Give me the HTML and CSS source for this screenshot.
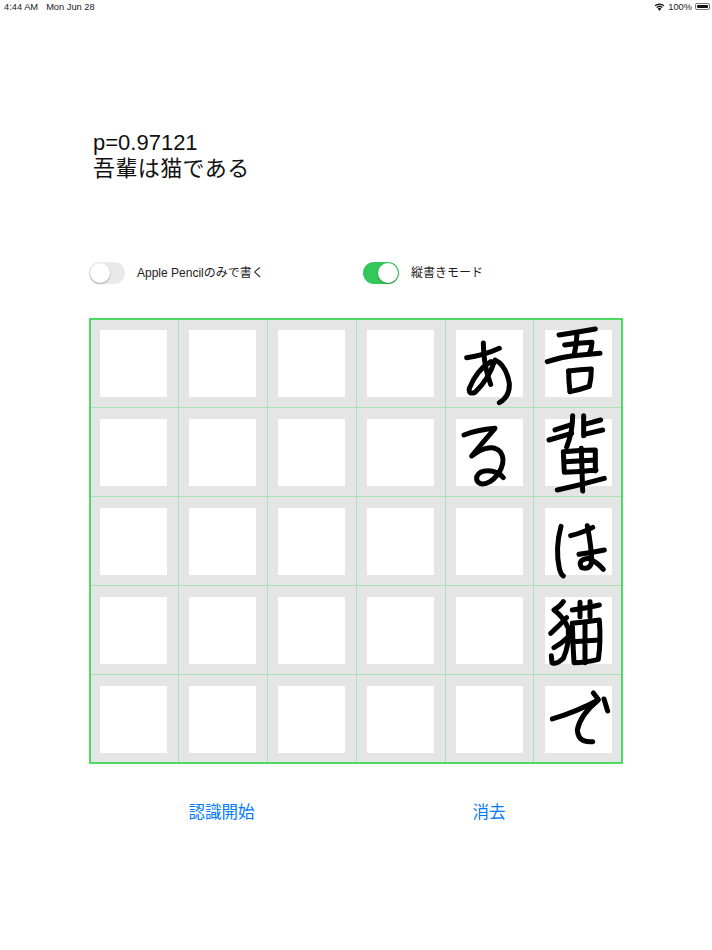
FILE: index.html
```html
<!DOCTYPE html>
<html lang="ja">
<head>
<meta charset="utf-8">
<title>手書き認識</title>
<link rel="stylesheet" href="styles.css">
</head>
<body>
<header class="status">
  <div class="status-left"><span>4:44 AM</span><span>Mon Jun 28</span></div>
  <div class="status-right">
    <svg class="wifi" viewBox="0 0 12 9" width="11" height="8"><path d="M6 8.8 3.9 6.4a3 3 0 0 1 4.2 0Z" fill="#111"/><path d="M2.8 5.2a4.7 4.7 0 0 1 6.4 0" class="wifi-arc"/><path d="M1 3.2a7.4 7.4 0 0 1 10 0" class="wifi-arc"/></svg>
    <span>100%</span>
    <span class="battery"><span class="battery-fill"></span></span>
  </div>
</header>
<section class="result">
  <div class="prob">p=0.97121</div>
  <div class="text">吾輩は猫である</div>
</section>
<section class="switches">
  <div class="switch-item">
    <span class="toggle"><span class="knob"></span></span>
    <span class="switch-label">Apple Pencilのみで書く</span>
  </div>
  <div class="switch-item">
    <span class="toggle on"><span class="knob"></span></span>
    <span class="switch-label">縦書きモード</span>
  </div>
</section>
<main class="board">
  <div class="cell"><div class="paper"></div></div><div class="cell"><div class="paper"></div></div><div class="cell"><div class="paper"></div></div><div class="cell"><div class="paper"></div></div><div class="cell"><div class="paper"></div></div><div class="cell"><div class="paper"></div></div>
  <div class="cell"><div class="paper"></div></div><div class="cell"><div class="paper"></div></div><div class="cell"><div class="paper"></div></div><div class="cell"><div class="paper"></div></div><div class="cell"><div class="paper"></div></div><div class="cell"><div class="paper"></div></div>
  <div class="cell"><div class="paper"></div></div><div class="cell"><div class="paper"></div></div><div class="cell"><div class="paper"></div></div><div class="cell"><div class="paper"></div></div><div class="cell"><div class="paper"></div></div><div class="cell"><div class="paper"></div></div>
  <div class="cell"><div class="paper"></div></div><div class="cell"><div class="paper"></div></div><div class="cell"><div class="paper"></div></div><div class="cell"><div class="paper"></div></div><div class="cell"><div class="paper"></div></div><div class="cell"><div class="paper"></div></div>
  <div class="cell"><div class="paper"></div></div><div class="cell"><div class="paper"></div></div><div class="cell"><div class="paper"></div></div><div class="cell"><div class="paper"></div></div><div class="cell"><div class="paper"></div></div><div class="cell"><div class="paper"></div></div>
  <svg class="ink" viewBox="0 0 534 446" width="534" height="446" aria-hidden="true">
    <g transform="translate(351 -3) scale(.3333)">
      <path d="M357 60 Q410 52 466 42"/>
      <path d="M411 56 Q410 90 402 122"/>
      <path d="M374 90 Q415 84 456 82 Q455 100 448 116"/>
      <path d="M322 140 Q360 126 400 122 Q445 118 480 115"/>
      <path d="M386 168 Q386 200 390 230"/>
      <path d="M386 168 Q420 164 454 162 Q454 190 448 214 Q420 224 390 230"/>
      <path d="M80 128 Q130 122 178 100"/>
      <path d="M130 84 Q130 150 152 208"/>
      <path d="M152 140 Q110 165 88 220 Q85 240 105 232 Q145 195 165 135 Q198 150 208 205 Q210 245 178 263"/>
      <path d="M72 360 Q110 345 165 340 Q130 380 95 423 C130 395 165 390 182 412 C200 440 180 480 150 500 C125 514 108 505 110 485 C120 462 165 460 190 488"/>
      <path d="M398 302 Q398 350 380 396"/>
      <path d="M431 302 V362"/>
      <path d="M345 345 L392 330M327 375 L395 355M433 328 L482 315M433 358 L488 345"/>
      <path d="M370 410 Q420 405 466 405 V468M370 410 L373 472Q420 470 468 465M375 440 L466 435"/>
      <path d="M352 525 Q420 510 493 490"/>
      <path d="M424 400 L428 528"/>
    </g>
    <g transform="translate(441 177) scale(.3333)">
      <path d="M93 94 Q75 160 88 220 Q92 238 100 243"/>
      <path d="M122 122 Q160 112 188 97"/>
      <path d="M147 178 Q190 172 223 165"/>
      <path d="M172 92 Q185 160 185 200 Q180 226 155 218 Q140 195 175 190 Q200 200 220 223"/>
      <path d="M100 320 Q90 335 72 345 Q100 365 115 400 Q118 450 100 490 Q80 510 66 503 L64 482"/>
      <path d="M110 368 Q85 395 62 415M115 425 Q95 445 72 458"/>
      <path d="M127 345 Q170 340 208 330M150 322 V365M180 320 V365"/>
      <path d="M127 385 Q170 380 208 375 Q213 440 205 493 Q165 503 132 503 Q128 440 127 385"/>
      <path d="M127 440 L208 435M165 382 L165 503"/>
      <path d="M67 672 Q140 650 205 615 Q150 660 142 705 Q145 745 188 740"/>
      <path d="M190 594 L204 612M222 612 L233 648"/>
    </g>
  </svg>
</main>
<footer class="actions">
  <button class="action start" type="button">認識開始</button>
  <button class="action clear" type="button">消去</button>
</footer>
</body>
</html>
```
FILE: styles.css
```css
* { box-sizing: border-box; }
html, body { margin: 0; padding: 0; background: #fff; }
body {
  width: 712px;
  height: 950px;
  overflow: hidden;
  font-family: "Liberation Sans", "Noto Sans CJK JP", sans-serif;
  color: #111;
}
.status {
  display: flex;
  justify-content: space-between;
  align-items: center;
  height: 13px;
  padding: 0 2px 0 4px;
  font-size: 9.3px;
  color: #222;
}
.status-left { display: flex; gap: 8px; }
.status-right { display: flex; align-items: center; gap: 3px; }
.wifi-arc { fill: none; stroke: #111; stroke-width: 1.5; }
.battery {
  display: flex;
  width: 15px;
  height: 7px;
  padding: 1px;
  border: 0.5px solid #777;
  border-radius: 2px;
}
.battery-fill { flex: 1; background: #111; border-radius: 1px; }
.result {
  padding: 117px 0 0 93px;
  height: 249px;
}
.prob { font-size: 22px; line-height: 26px; }
.text { font-size: 22px; line-height: 26px; letter-spacing: 0.4px; }
.switches {
  display: flex;
  padding-left: 89px;
  height: 56px;
}
.switch-item {
  display: flex;
  align-items: flex-start;
  width: 274px;
  gap: 12px;
}
.toggle {
  display: block;
  width: 36px;
  height: 22px;
  padding: 1px;
  border-radius: 11px;
  background: #e9e9ea;
  flex: none;
}
.toggle.on { display: flex; justify-content: flex-end; background: #34c759; }
.knob {
  display: block;
  width: 20px;
  height: 20px;
  border-radius: 50%;
  background: #fff;
  box-shadow: 0 1px 2px rgba(0,0,0,.3);
}
.switch-label { font-size: 12px; line-height: 22px; color: #222; }
.board {
  position: relative;
  display: grid;
  grid-template-columns: repeat(4, 89px) 88px 90px;
  grid-auto-rows: 89px;
  align-content: start;
  width: 534px;
  height: 446px;
  margin-left: 89px;
  background: #e5e5e5;
  outline: 2px solid #4cd964;
  outline-offset: -2px;
}
.cell {
  padding: 11px 10px 10px;
  background: #e5e5e5;
  border-left: 1px solid #a9e2b5;
  border-top: 1px solid #a9e2b5;
}
.cell:nth-child(6n) { padding-left: 11px; }
.paper { width: 67px; height: 67px; background: #fff; }
.ink {
  position: absolute;
  inset: 0;
  fill: none;
  stroke: #000;
  stroke-width: 15;
  stroke-linecap: round;
  stroke-linejoin: round;
}
.actions {
  display: flex;
  padding-top: 36px;
}
.action {
  border: 0;
  background: none;
  padding: 0;
  font-family: "Liberation Sans", "Noto Sans CJK JP", sans-serif;
  font-size: 16.5px;
  line-height: 24px;
  color: #007aff;
}
.start { margin-left: 188.5px; }
.clear { margin-left: 218px; }
```
